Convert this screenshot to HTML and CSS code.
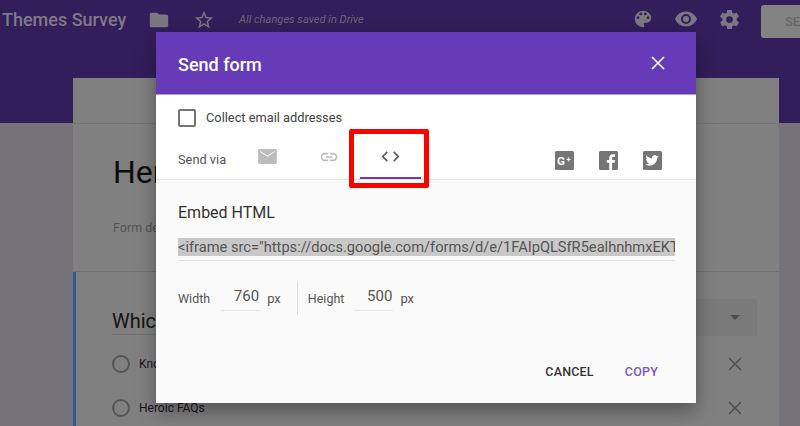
FILE: index.html
```html
<!DOCTYPE html>
<html lang="en">
<head>
<meta charset="utf-8">
<title>Themes Survey</title>
<link rel="stylesheet" href="styles.css">
</head>
<body>
<div class="page">
  <header class="topbar">
    <div class="topbar-row">
      <span class="doc-title">Themes Survey</span>
      <svg class="ico folder" viewBox="0 0 24 24"><path d="M10 4H4c-1.1 0-2 .9-2 2v12c0 1.1.9 2 2 2h16c1.1 0 2-.9 2-2V8c0-1.100-.9-2-2-2h-8l-2-2z"/></svg>
      <svg class="ico star" viewBox="0 0 24 24"><path d="M22 9.240l-7.190-.62L12 2 9.190 8.630 2 9.240l5.460 4.730L5.820 21 12 17.270 18.180 21l-1.630-7.030L22 9.240zM12 15.400l-3.760 2.270 1-4.280-3.320-2.880 4.380-.38L12 6.100l1.710 4.040 4.380.38-3.320 2.880 1 4.280L12 15.400z"/></svg>
      <span class="saved">All changes saved in Drive</span>
      <span class="spacer"></span>
      <svg class="ico palette" viewBox="0 0 24 24"><path d="M12 3a9 9 0 0 0 0 18c.83 0 1.500-.67 1.500-1.500 0-.39-.15-.74-.39-1.010-.23-.26-.38-.61-.38-.99 0-.83.67-1.500 1.500-1.500H16c2.760 0 5-2.240 5-5 0-4.420-4.030-8-9-8zm-5.500 9a1.500 1.500 0 1 1 0-3 1.500 1.500 0 0 1 0 3zm3-4a1.500 1.500 0 1 1 0-3 1.500 1.500 0 0 1 0 3zm5 0a1.500 1.500 0 1 1 0-3 1.500 1.500 0 0 1 0 3zm3 4a1.500 1.500 0 1 1 0-3 1.500 1.500 0 0 1 0 3z"/></svg>
      <svg class="ico eye" viewBox="0 0 24 24"><path d="M12 4.500C7 4.500 2.730 7.610 1 12c1.730 4.390 6 7.500 11 7.500s9.270-3.110 11-7.500c-1.730-4.390-6-7.500-11-7.500zM12 17a5 5 0 1 1 0-10 5 5 0 0 1 0 10zm0-8a3 3 0 1 0 0 6 3 3 0 0 0 0-6z"/></svg>
      <svg class="ico gear" viewBox="0 0 24 24"><path d="M19.430 12.980c.04-.32.07-.64.07-.98s-.03-.66-.07-.98l2.110-1.650c.19-.15.24-.42.12-.64l-2-3.460c-.12-.22-.39-.3-.61-.22l-2.490 1c-.52-.4-1.080-.73-1.690-.98l-.38-2.650A.49.49 0 0 0 14 2h-4c-.25 0-.46.180-.49.420l-.38 2.650c-.61.25-1.170.59-1.690.98l-2.490-1c-.23-.09-.49 0-.61.22l-2 3.460c-.13.22-.07.49.12.64l2.110 1.650c-.04.32-.07.65-.07.98s.03.66.07.98l-2.110 1.650c-.19.15-.24.42-.12.64l2 3.460c.12.22.39.3.61.22l2.490-1c.52.4 1.080.73 1.690.98l.38 2.650c.03.24.24.42.49.42h4c.25 0 .46-.18.49-.42l.38-2.650c.61-.25 1.170-.59 1.690-.98l2.490 1c.23.09.49 0 .61-.22l2-3.460c.12-.22.07-.49-.12-.64l-2.110-1.650zM12 15.500a3.500 3.500 0 1 1 0-7 3.500 3.500 0 0 1 0 7z"/></svg>
      <span class="send-btn">SEND</span>
    </div>
  </header>

  <main class="form-column">
    <section class="form-head">
      <div class="head-inner">
        <h1 class="form-title">Her</h1>
        <p class="form-desc">Form description</p>
      </div>
    </section>
    <section class="question">
      <div class="q-row">
        <h2 class="q-title">Which</h2>
        <div class="q-type"><span class="caret"></span></div>
      </div>
      <div class="option"><span class="radio"></span><span class="opt-text">Knowledge base</span><svg class="opt-x" viewBox="0 0 14 14"><path d="M1 1l12 12M13 1L1 13"/></svg></div>
      <div class="option"><span class="radio"></span><span class="opt-text">Heroic FAQs</span><svg class="opt-x" viewBox="0 0 14 14"><path d="M1 1l12 12M13 1L1 13"/></svg></div>
    </section>
  </main>
</div>

<div class="dialog">
  <div class="dlg-head">
    <span class="dlg-title">Send form</span>
    <svg class="dlg-close" viewBox="0 0 14 14"><path d="M1 1l12 12M13 1L1 13"/></svg>
  </div>
  <div class="dlg-top">
    <label class="collect"><span class="checkbox"></span><span>Collect email addresses</span></label>
    <div class="via-row">
      <span class="via-label">Send via</span>
      <span class="tab tab-mail"><svg viewBox="0 0 20 16"><path class="mail" d="M1.500 0h17c.8 0 1.500.7 1.500 1.500v13c0 .8-.7 1.500-1.500 1.500h-17C.7 16 0 15.300 0 14.500v-13C0 .7.700 0 1.500 0zM2 3l8 5.200L18 3v-.9L10 7 2 2.100z"/></svg></span>
      <span class="tab tab-link"><svg viewBox="0 0 24 24"><path class="link" d="M3.900 12c0-1.710 1.390-3.100 3.100-3.100h4V7H7a5 5 0 0 0 0 10h4v-1.900H7c-1.710 0-3.100-1.390-3.100-3.100zM8 13h8v-2H8v2zm9-6h-4v1.900h4c1.710 0 3.100 1.390 3.100 3.100s-1.390 3.100-3.100 3.100h-4V17h4a5 5 0 0 0 0-10z"/></svg></span>
      <span class="tab tab-code"><svg viewBox="0 0 20 12"><path d="M6.500 1L1.500 6l5 5M13.500 1l5 5-5 5"/></svg></span>
      <span class="spacer"></span>
      <span class="social"><svg viewBox="0 0 18 18"><rect class="sq" width="18" height="18" rx="1.500"/><text class="gplus" x="2" y="13">G</text><text class="gplus-small" x="11" y="10.500">+</text></svg></span>
      <span class="social"><svg viewBox="0 0 18 18"><path class="sq" d="M1.500 0h15c.8 0 1.500.7 1.500 1.500v15c0 .8-.7 1.500-1.500 1.500H12.400v-6.800h2.300l.4-2.700h-2.700V6.800c0-.8.300-1.300 1.400-1.300h1.400V3.100c-.3 0-1.100-.1-2-.1-2.100 0-3.500 1.300-3.500 3.500v2H7.400v2.700h2.300V18H1.500C.7 18 0 17.300 0 16.500v-15C0 .7.700 0 1.500 0z"/></svg></span>
      <span class="social"><svg viewBox="0 0 18 18"><rect class="sq" width="18" height="18" rx="1.500"/><path class="bird" d="M15 5.200c-.5.200-1 .4-1.500.4.500-.3 1-.8 1.200-1.400-.5.300-1.100.5-1.700.6a2.600 2.600 0 0 0-4.500 2.400C6.300 6.700 4.400 5.700 3.100 4.100c-.7 1.200-.3 2.700.8 3.500-.4 0-.8-.1-1.200-.3 0 1.300.9 2.400 2.100 2.600-.4.100-.8.100-1.200 0 .3 1 1.300 1.800 2.400 1.800-1.100.9-2.400 1.200-3.800 1.100 1.100.7 2.500 1.100 3.900 1.100 4.800 0 7.400-4 7.300-7.500.6-.3 1.100-.8 1.600-1.300z"/></svg></span>
    </div>
  </div>
  <div class="dlg-body">
    <h3 class="embed-title">Embed HTML</h3>
    <div class="embed-field"><span class="embed-sel">&lt;iframe src="https://docs.google.com/forms/d/e/1FAIpQLSfR5ealhnhmxEKTxyz/viewform?embedded=true" width="760" height="500"&gt;</span></div>
    <div class="size-row">
      <span class="size-label">Width</span>
      <span class="size-val size-w">760</span>
      <span class="size-unit">px</span>
      <span class="size-sep"></span>
      <span class="size-label">Height</span>
      <span class="size-val size-h">500</span>
      <span class="size-unit">px</span>
    </div>
    <div class="actions">
      <span class="btn btn-cancel">CANCEL</span>
      <span class="btn btn-copy">COPY</span>
    </div>
  </div>
</div>
<div class="highlight"></div>
</body>
</html>
```

FILE: styles.css
```css
* { box-sizing: border-box; }
html, body { margin: 0; padding: 0; }
body {
  width: 800px; height: 426px; overflow: hidden; position: relative;
  background: #76727a;
  font-family: Roboto, "Liberation Sans", sans-serif;
}
.page { width: 800px; height: 426px; overflow: hidden; }
.spacer { flex: 1; }

.topbar { height: 123px; background: #321e5b; }
.topbar-row { display: flex; align-items: center; height: 39px; padding-left: 2px; }
.doc-title { font-size: 18px; font-weight: 500; color: #7f7a85; width: 146px; }
.ico { fill: #7c7782; flex: none; }
.folder { width: 22px; height: 22px; margin-right: 23px; }
.star { width: 22px; height: 22px; margin-right: 24px; }
.saved { font-size: 11.100px; font-style: italic; color: #6c6478; }
.palette { width: 22px; height: 22px; margin-right: 20px; margin-top: -2px; }
.eye { width: 24px; height: 24px; margin-right: 20px; margin-top: -2px; }
.gear { width: 23px; height: 23px; margin-right: 20px; margin-top: -1px; }
.send-btn {
  width: 39px; height: 33px; margin-top: 3px; padding: 9px 0 0 24px; flex: none;
  background: #838383; border-radius: 3px 0 0 3px;
  font-size: 13px; font-weight: 500; color: #666; overflow: hidden; white-space: nowrap;
}

.form-column { width: 706px; margin: -45px 0 0 73px; }
.form-head { height: 194px; background: #808080; border-bottom: 1px solid #6f6f6f; padding-top: 45px; }
.head-inner { height: 149px; border-top: 1px solid #747474; padding: 28px 0 0 40px; }
.form-title { margin: 0; font-size: 32px; font-weight: 400; line-height: 40px; color: #0c0c0c; white-space: nowrap; }
.form-desc { margin: 28px 0 0; font-size: 12.500px; line-height: 16px; color: #555; }
.question { height: 200px; background: #808080; border-left: 3px solid #33579b; padding: 27px 22px 0 36px; }
.q-row { display: flex; justify-content: space-between; height: 37px; margin-bottom: 6px; }
.q-title { margin: 0; width: 200px; height: 36px; padding-top: 9px; border-bottom: 1px solid #747474; font-size: 20px; font-weight: 400; line-height: 26px; color: #141414; }
.q-type { width: 200px; background: #7a7a7a; position: relative; }
.caret { position: absolute; right: 17px; top: 16px; width: 0; height: 0; border: 5px solid transparent; border-top-color: #4c4c4c; border-bottom: 0; }
.option { display: flex; align-items: center; height: 44px; }
.radio { width: 18px; height: 18px; border: 2px solid #565656; border-radius: 50%; margin: 0 9px 0 0; flex: none; }
.opt-text { flex: 1; font-size: 12px; color: #1c1420; }
.opt-x { width: 14px; height: 14px; margin-right: 15px; stroke: #4f4f4f; stroke-width: 1.500; fill: none; }

.dialog {
  position: absolute; left: 156px; top: 32px; width: 540px; height: 371px;
  background: #fafafa; box-shadow: 0 8px 18px rgba(0,0,0,.35);
  display: flex; flex-direction: column;
}
.dlg-head { height: 63px; flex: none; background: #673ab7; border-bottom: 1px solid #b39ddb; display: flex; align-items: center; justify-content: space-between; padding: 3px 31px 0 22px; }
.dlg-title { font-size: 18px; font-weight: 500; color: #fff; }
.dlg-close { width: 14px; height: 14px; stroke: #fff; stroke-width: 1.700; fill: none; margin-top: -3px; }
.dlg-top { height: 85px; flex: none; background: #fff; border-bottom: 1px solid #e4e4e4; padding: 14px 34px 0 22px; }
.collect { display: flex; align-items: center; font-size: 12.800px; color: #444; gap: 10px; height: 18px; line-height: 16px; }
.checkbox { width: 18px; height: 18px; border: 2px solid #757575; border-radius: 2px; }
.via-row { display: flex; align-items: flex-start; height: 52px; font-size: 12.800px; color: #555; }
.via-label { margin-top: 25px; line-height: 16px; width: 70px; flex: none; }
.tab { display: block; height: 52px; flex: none; }
.tab svg { display: block; }
.tab-mail { width: 61px; padding-top: 22px; margin-left: 10px; }
.tab-mail svg { width: 19px; height: 15px; }
.mail { fill: #bdbdbd; fill-rule: evenodd; }
.tab-link { width: 41px; padding-top: 19px; }
.tab-link svg { width: 20px; height: 22px; }
.link { fill: #bdbdbd; }
.tab-code { width: 61px; padding: 24px 0 0 21px; border-bottom: 2px solid #673ab7; }
.tab-code svg { width: 19px; height: 11px; stroke: #5a5a5a; stroke-width: 1.800; fill: none; }
.social { display: block; width: 19px; height: 19px; margin: 24px 0 0 25px; flex: none; }
.social svg { display: block; width: 19px; height: 19px; overflow: hidden; }
.sq { fill: #757575; }
.gplus { fill: #fff; font-family: Roboto, sans-serif; font-weight: 700; font-size: 11px; }
.gplus-small { fill: #fff; font-family: Roboto, sans-serif; font-weight: 700; font-size: 7px; }
.bird { fill: #fff; }
.dlg-body { flex: 1; padding: 0 22px; display: flex; flex-direction: column; }
.embed-title { margin: 22px 0 0; font-size: 16px; font-weight: 400; line-height: 22px; color: #333; }
.embed-field { margin-top: 14px; width: 497px; height: 23px; border-bottom: 1px solid #e0e0e0; overflow: hidden; white-space: nowrap; font-size: 14.650px; color: #555; }
.embed-sel { display: block; width: 497px; height: 18px; line-height: 18px; background: #c8c8c8; overflow: hidden; }
.size-row { display: flex; align-items: center; margin-top: 21px; height: 33px; font-size: 12.500px; color: #555; }
.size-label { line-height: 16px; }
.size-val { width: 39px; height: 24px; text-align: right; padding-right: 1px; border-bottom: 1px solid #e8e8e8; font-size: 15px; line-height: 18px; color: #555; }
.size-w { margin-left: 11px; }
.size-h { margin-left: 10px; }
.size-unit { margin-left: 7px; font-size: 13px; }
.size-sep { width: 1px; height: 33px; background: #e0e0e0; margin: 0 10px 0 16px; }
.actions { display: flex; justify-content: flex-end; gap: 31px; margin-top: 49px; padding-right: 16px; }
.btn { font-size: 12.500px; font-weight: 500; line-height: 16px; letter-spacing: .2px; }
.btn-cancel { color: #333; }
.btn-copy { color: #7e57c2; }

.highlight { position: absolute; left: 349px; top: 129px; width: 80px; height: 59px; border: 5px solid #f00; border-radius: 2px; }
```
